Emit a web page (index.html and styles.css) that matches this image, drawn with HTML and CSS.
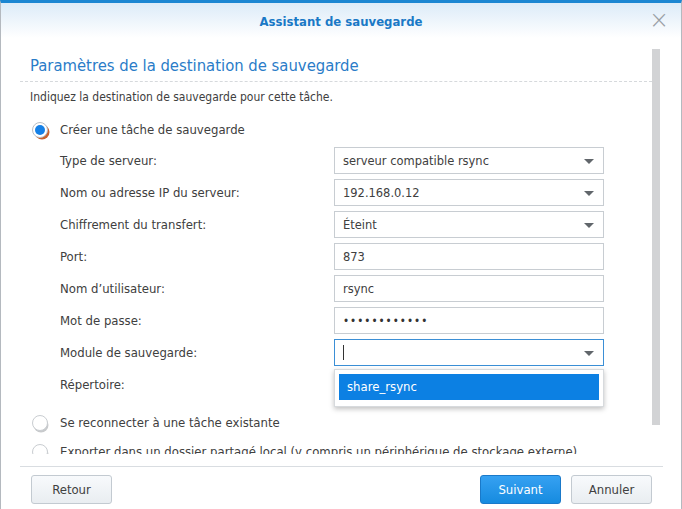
FILE: index.html
```html
<!DOCTYPE html>
<html lang="fr">
<head>
    <meta charset="UTF-8">
    <title>Assistant de sauvegarde</title>
    <link rel="stylesheet" href="styles.css">
</head>
<body>
    <div class="dialog">
        <div class="titlebar">
            <span class="title">Assistant de sauvegarde</span>
            <span class="close">&times;</span>
        </div>
        <div class="main">
            <div class="scroll">
                <h2 class="heading">Paramètres de la destination de sauvegarde</h2>
                <p class="intro">Indiquez la destination de sauvegarde pour cette tâche.</p>
                <label class="radio checked"><i></i>Créer une tâche de sauvegarde</label>
                <div class="form">
                    <span class="label">Type de serveur:</span>
                    <div class="field combo">serveur compatible rsync<b></b></div>
                    <span class="label">Nom ou adresse IP du serveur:</span>
                    <div class="field combo">192.168.0.12<b></b></div>
                    <span class="label">Chiffrement du transfert:</span>
                    <div class="field combo">Éteint<b></b></div>
                    <span class="label">Port:</span>
                    <div class="field">873</div>
                    <span class="label">Nom d’utilisateur:</span>
                    <div class="field">rsync</div>
                    <span class="label">Mot de passe:</span>
                    <div class="field password">••••••••••••</div>
                    <span class="label">Module de sauvegarde:</span>
                    <div class="field combo focus"><span class="caret"></span><b></b>
                        <ul class="menu">
                            <li class="selected">share_rsync</li>
                        </ul>
                    </div>
                    <span class="label">Répertoire:</span>
                    <div class="field hidden"></div>
                </div>
                <label class="radio"><i></i>Se reconnecter à une tâche existante</label>
                <label class="radio next"><i></i>Exporter dans un dossier partagé local (y compris un périphérique de stockage externe)</label>
            </div>
            <div class="track"><div class="thumb"></div></div>
        </div>
        <div class="footer">
            <button class="btn">Retour</button>
            <span class="spacer"></span>
            <button class="btn primary">Suivant</button>
            <button class="btn">Annuler</button>
        </div>
    </div>
</body>
</html>
```

FILE: styles.css
```css
body {
    margin: 0;
    font-family: "DejaVu Sans", Verdana, sans-serif;
    font-stretch: condensed;
    color: #404040;
    background: #fff;
}
.dialog {
    box-sizing: border-box;
    height: 509px;
    display: flex;
    flex-direction: column;
    border: 1px solid #b4b9bf;
    border-top: 3px solid #1b86d2;
    border-bottom: none;
}
.titlebar {
    height: 35px;
    display: flex;
    align-items: center;
    justify-content: center;
    position: relative;
    background: linear-gradient(#dcebf8, #fff);
}
.title {
    font-size: 13px;
    font-weight: bold;
    color: #1a79c6;
    margin-top: 1px;
}
.close {
    position: absolute;
    right: 12px;
    top: 4px;
    font-size: 24px;
    font-weight: 300;
    color: #9aa0a6;
    line-height: 26px;
}
.main {
    flex: 1;
    display: flex;
    overflow: hidden;
}
.scroll {
    flex: 1;
    padding-left: 19px;
    overflow: hidden;
    height: 416px;
}
.heading {
    margin: 0;
    padding: 18px 0 5px 10px;
    font-size: 16.5px;
    font-weight: normal;
    color: #2a7cc8;
    line-height: 20px;
    border-bottom: 1px dashed #d6d9dc;
}
.intro {
    margin: 7px 0 0 10px;
    font-size: 12px;
    line-height: 16px;
}
.radio {
    display: flex;
    align-items: center;
    margin: 17px 0 0 12px;
    font-size: 13px;
    white-space: nowrap;
    line-height: 16px;
}
.radio.next {
    margin-top: 13px;
}
.radio i {
    box-sizing: border-box;
    flex: none;
    width: 16px;
    height: 16px;
    border-radius: 50%;
    border: 1px solid #c9cdd1;
    background: #fff;
    box-shadow: 1px 2px 0 -0.5px #c8cacc;
    margin-right: 12px;
    display: flex;
    align-items: center;
    justify-content: center;
}
.radio.checked i {
    border-color: #b9bec3;
    box-shadow: 2px 2px 0 -0.5px #c8622e;
}
.radio.checked i::after {
    content: "";
    width: 10px;
    height: 10px;
    border-radius: 50%;
    background: #1580e6;
}
.form {
    display: grid;
    grid-template-columns: 274px 270px;
    grid-auto-rows: 27px;
    row-gap: 5px;
    margin: 9px 0 0 40px;
}
.label {
    display: flex;
    align-items: center;
    font-size: 13px;
}
.field {
    position: relative;
    box-sizing: border-box;
    display: flex;
    align-items: center;
    border: 1px solid #c8cdd2;
    padding: 0 8px;
    font-size: 12.75px;
    color: #404040;
    background: #fff;
}
.field.hidden {
    visibility: hidden;
}
.password {
    font-size: 11.5px;
    letter-spacing: 1px;
    color: #333;
}
.combo b {
    position: absolute;
    right: 9px;
    top: 11px;
    width: 0;
    height: 0;
    border-left: 5px solid transparent;
    border-right: 5px solid transparent;
    border-top: 5px solid #61666b;
}
.focus {
    border-color: #3b8fd6;
}
.caret {
    width: 1px;
    height: 15px;
    background: #333;
}
.menu {
    position: absolute;
    left: -1px;
    right: -1px;
    top: 29px;
    margin: 0;
    padding: 4px 4px 6px;
    list-style: none;
    background: #fff;
    border: 1px solid #d7dadd;
    box-shadow: 0 2px 5px rgba(0, 0, 0, 0.25);
    z-index: 5;
}
.menu li {
    height: 26px;
    line-height: 26px;
    padding: 0 8px;
    font-size: 13px;
}
.menu .selected {
    background: #0c80e3;
    color: #fff;
}
.track {
    width: 8px;
    margin-right: 21px;
    padding-top: 11px;
}
.thumb {
    height: 376px;
    background: #d2d3d5;
}
.footer {
    display: flex;
    align-items: center;
    gap: 10px;
    margin: 11px 18px 0 19px;
    padding: 8px 11px 5px 11px;
    border-top: 1px solid #d9dde1;
}
.spacer {
    flex: 1;
}
.btn {
    height: 29px;
    min-width: 81px;
    padding: 0 12px;
    border: 1px solid #c3cad1;
    border-radius: 3px;
    background: linear-gradient(#f8fafc, #e9edf1);
    font-family: inherit;
    font-stretch: condensed;
    font-size: 13px;
    color: #404040;
}
.btn.primary {
    border-color: #1a79c9;
    background: linear-gradient(#36a1f2, #168bdf);
    color: #fff;
}
```
